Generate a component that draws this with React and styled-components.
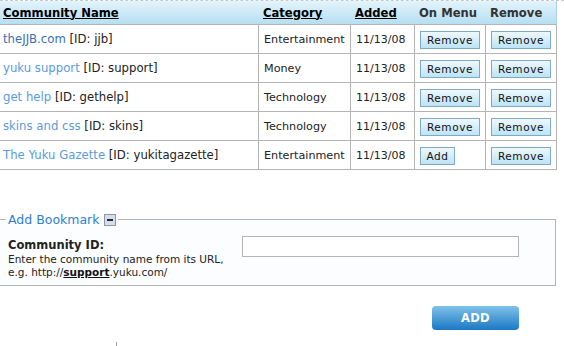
import React from 'react'
import styled, { createGlobalStyle } from 'styled-components'

const rows = [
  { name: 'theJJB.com', id: 'jjb', category: 'Entertainment', added: '11/13/08', onMenu: true, visited: true },
  { name: 'yuku support', id: 'support', category: 'Money', added: '11/13/08', onMenu: true },
  { name: 'get help', id: 'gethelp', category: 'Technology', added: '11/13/08', onMenu: true },
  { name: 'skins and css', id: 'skins', category: 'Technology', added: '11/13/08', onMenu: true },
  { name: 'The Yuku Gazette', id: 'yukitagazette', category: 'Entertainment', added: '11/13/08', onMenu: false }
]

const App = () => {
  return (
    <Page>
      <GlobalStyle />
      <Table>
        <colgroup>
          <col style={{ width: 259 }} />
          <col style={{ width: 92 }} />
          <col style={{ width: 64 }} />
          <col style={{ width: 71 }} />
          <col style={{ width: 71 }} />
        </colgroup>
        <thead>
          <tr>
            <Th><SortLink>Community Name</SortLink></Th>
            <Th><SortLink>Category</SortLink></Th>
            <Th><SortLink>Added</SortLink></Th>
            <Th>On Menu</Th>
            <Th $last>Remove</Th>
          </tr>
        </thead>
        <tbody>
          {rows.map((row, i) => (
            <tr key={i}>
              <Td $size={11.7}>
                <NameLink $visited={row.visited}>{row.name}</NameLink> [ID: {row.id}]
              </Td>
              <Td $size={11.2}>{row.category}</Td>
              <Td>{row.added}</Td>
              <Td><SmallButton $wide={row.onMenu}>{row.onMenu ? 'Remove' : 'Add'}</SmallButton></Td>
              <Td><SmallButton $wide>Remove</SmallButton></Td>
            </tr>
          ))}
        </tbody>
      </Table>

      <Fieldset>
        <Legend>
          Add Bookmark <Toggle />
        </Legend>
        <FieldRow>
          <FieldLabel>
            <LabelTitle>Community ID:</LabelTitle>
            <LabelHint>
              Enter the community name from its URL,<br />
              e.g. http://<b><u>support</u></b>.yuku.com/
            </LabelHint>
          </FieldLabel>
          <TextInput type='text' />
        </FieldRow>
      </Fieldset>

      <Actions>
        <AddButton>ADD</AddButton>
      </Actions>
      <Tick />
    </Page>
  )
}

// Styles
const GlobalStyle = createGlobalStyle`
  body {
    margin: 0;
    background: #fff;
    font-family: Verdana, "DejaVu Sans", sans-serif;
    color: #222;
  }
`

const Page = styled.div`
  width: 564px;
  height: 346px;
  overflow: hidden;
  border-top: 1px dashed #c8c8c8;
  box-sizing: border-box;
  position: relative;
`

const Table = styled.table`
  table-layout: fixed;
  border-collapse: separate;
  border-spacing: 0;
  width: 557px;
`

const Th = styled.th`
  height: 23px;
  padding: 0 0 0 4px;
  text-align: left;
  font-size: 11.6px;
  font-weight: bold;
  color: #333;
  background: linear-gradient(#e3f4fc, #b6def2);
  border-bottom: 1px solid #b4b4b4;
  border-right: ${p => p.$last ? '1px solid #a9d2e6' : 'none'};
  white-space: nowrap;
  &:first-child { padding-left: 3px; }
`

const SortLink = styled.span`
  color: #000;
  text-decoration: underline;
`

const Td = styled.td`
  height: 28px;
  padding: 0 0 0 5px;
  font-size: ${p => p.$size || 11}px;
  color: #222;
  border-right: 1px solid #b4b4b4;
  border-bottom: 1px solid #b4b4b4;
  white-space: nowrap;
  &:first-child { padding-left: 3px; }
`

const NameLink = styled.a`
  color: ${p => p.$visited ? '#3b6fb3' : '#5a9be0'};
  text-decoration: none;
  cursor: pointer;
`

const SmallButton = styled.button`
  font-family: Verdana, "DejaVu Sans", sans-serif;
  font-size: 10.5px;
  letter-spacing: 0.6px;
  color: #111;
  height: 18px;
  width: ${p => p.$wide ? '60px' : '35px'};
  padding: 0;
  border: 1px solid #7fabc2;
  background: linear-gradient(#eef8fe, #bde3f6);
  border-radius: 0;
  margin-top: 1px;
`

const Fieldset = styled.fieldset`
  margin: 42px 0 0 0;
  width: 556px;
  box-sizing: border-box;
  padding: 9px 8px 6px 8px;
  border: 1px solid #b4b4b4;
  border-left: none;
  background: #fcfdff;
`

const Legend = styled.legend`
  margin-left: -2px;
  padding: 0 2px;
  font-size: 12.5px;
  color: #2f7ed4;
  display: flex;
  align-items: center;
  gap: 4px;
`

const Toggle = styled.span`
  display: inline-block;
  width: 10px;
  height: 10px;
  border: 1px solid #8c98aa;
  background: #d6deea linear-gradient(#1d2a3a, #1d2a3a) center / 6px 2px no-repeat;
`

const FieldRow = styled.div`
  display: flex;
  align-items: flex-start;
  justify-content: space-between;
  padding-right: 28px;
`

const FieldLabel = styled.div`
  font-size: 10.5px;
  line-height: 13px;
  color: #222;
`

const LabelTitle = styled.div`
  font-size: 11.5px;
  font-weight: bold;
  line-height: 15px;
  padding-top: 2px;
`

const LabelHint = styled.div`
  b { color: #111; }
`

const TextInput = styled.input`
  width: 277px;
  height: 21px;
  box-sizing: border-box;
  border: 1px solid #b4b4b4;
  background: #fff;
  margin: 0;
`

const Actions = styled.div`
  display: flex;
  justify-content: flex-end;
  padding: 20px 45px 0 0;
`

const AddButton = styled.button`
  width: 87px;
  height: 24px;
  border: none;
  border-radius: 4px;
  background: linear-gradient(#80c1ea, #1a78c4);
  color: #fff;
  font-family: Verdana, "DejaVu Sans", sans-serif;
  font-weight: bold;
  font-size: 11.5px;
  letter-spacing: 0.3px;
`

const Tick = styled.div`
  position: absolute;
  left: 116px;
  bottom: 0;
  width: 1px;
  height: 4px;
  background: #a0a0a0;
`

export default App
